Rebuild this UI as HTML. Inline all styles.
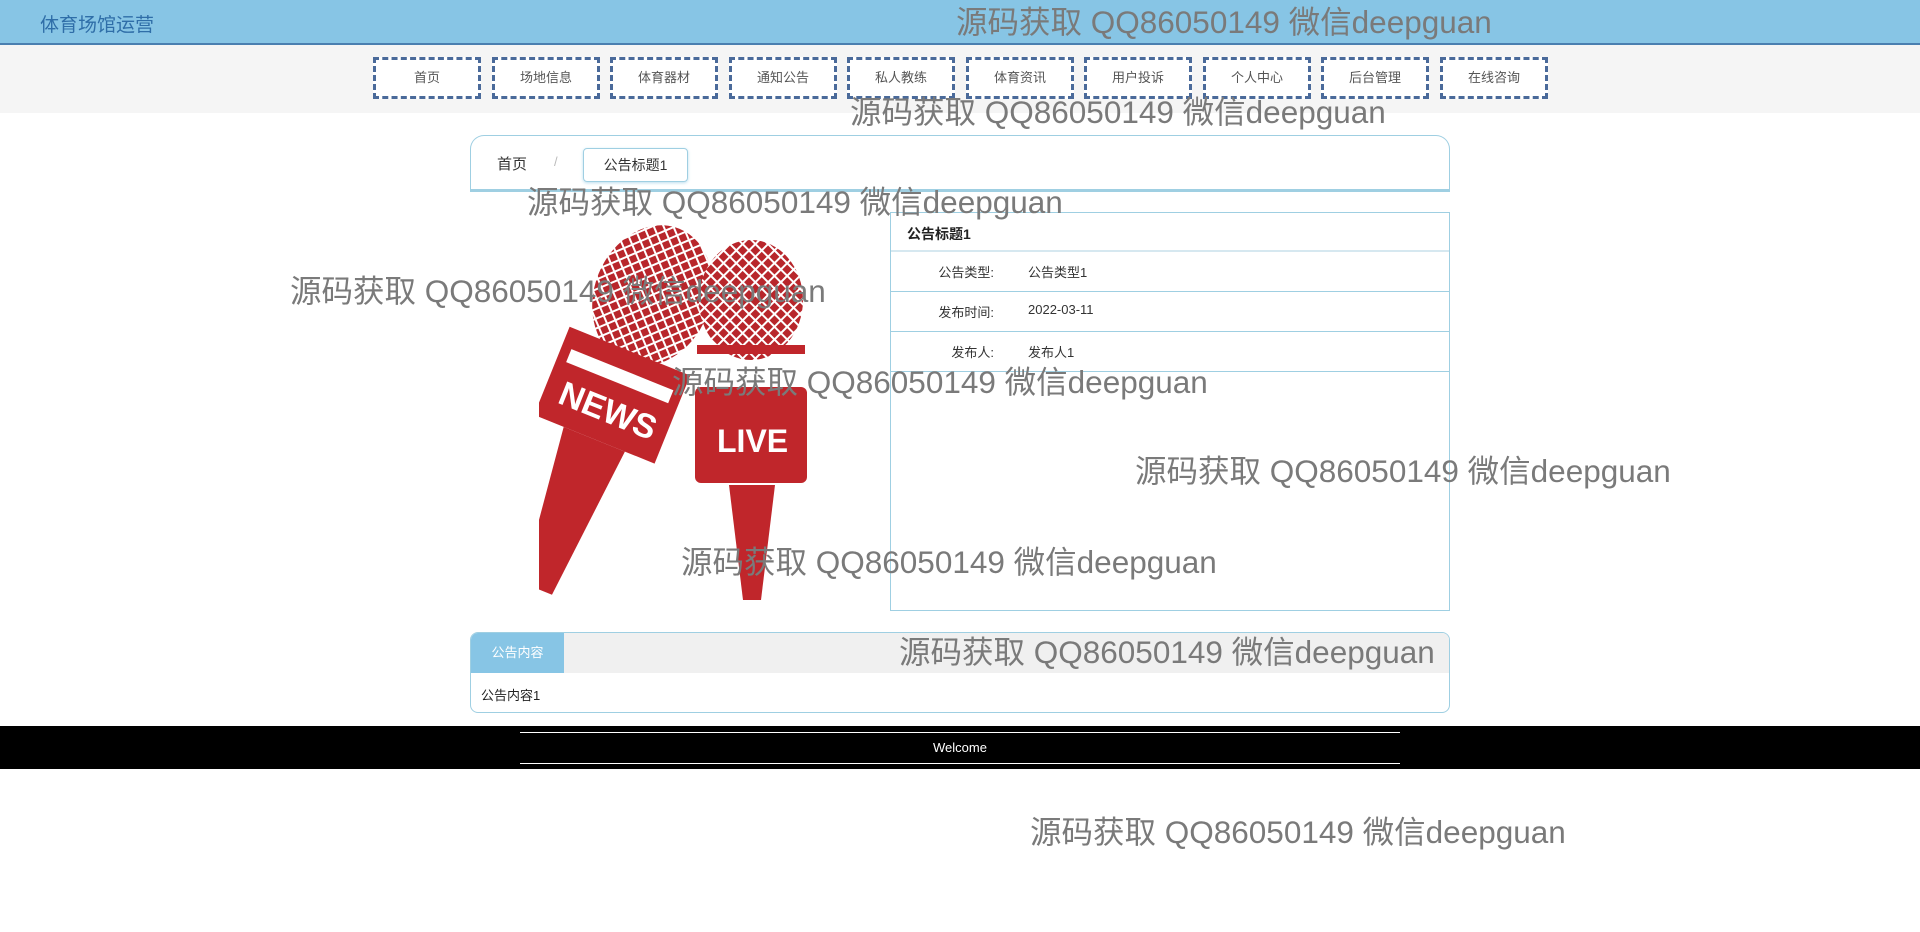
<!DOCTYPE html>
<html><head><meta charset="utf-8"><style>
*{margin:0;padding:0;box-sizing:border-box}
body{width:1920px;height:932px;background:#fff;font-family:"Liberation Sans","Noto Sans CJK SC",sans-serif;position:relative;overflow:hidden}
.hdr{position:absolute;left:0;top:0;width:1920px;height:45px;background:#87c5e5;border-bottom:2px solid #4a7fb0}
.hdr .t{position:absolute;left:40px;top:10px;font-size:19px;color:#2f6ea8}
.nav{position:absolute;left:0;top:45px;width:1920px;height:68px;background:#f5f5f5}
.nav a{position:absolute;top:12px;width:108px;height:42px;border:3px dashed #4a6a9a;background:#fff;font-size:13px;color:#555;text-align:center;line-height:36px;text-decoration:none}
.bc{position:absolute;left:470px;top:135px;width:980px;height:57px;border:1px solid #9fcfe2;border-bottom:3px solid #9fcfe2;border-radius:14px 14px 0 0;background:#fff}
.bc .h{position:absolute;left:26px;top:17px;font-size:15px;color:#333}
.bc .s{position:absolute;left:83px;top:18px;font-size:13px;color:#bbb}
.bc .a{position:absolute;left:112px;top:12px;width:105px;height:34px;border:1px solid #9fcfe2;border-radius:4px;font-size:14px;color:#333;text-align:center;line-height:32px;box-shadow:0 1px 3px #bde}
.tb{position:absolute;left:890px;top:212px;width:560px;height:399px;border:1px solid #9fcfe2}
.tb .ti{height:39px;border-bottom:2px solid #d6e8f0;font-size:14px;font-weight:bold;color:#222;padding:11px 0 0 16px}
.tb .r{height:40px;border-bottom:1px solid #9fcfe2;font-size:13px;color:#333;position:relative}
.tb .r .l{position:absolute;right:455px;top:10px}
.tb .r .v{position:absolute;left:137px;top:10px}
.ct{position:absolute;left:470px;top:632px;width:980px;height:81px;border:1px solid #9fcfe2;border-radius:8px;overflow:hidden}
.ct .bar{height:40px;background:#f0f0f0}
.ct .tab{position:absolute;left:0;top:0;width:93px;height:40px;background:#87c5e5;color:#fff;font-size:13px;text-align:center;line-height:40px}
.ct .bd{position:absolute;left:10px;top:52px;font-size:13px;color:#222}
.ft{position:absolute;left:0;top:726px;width:1920px;height:43px;background:#000}
.ft .ln{position:absolute;left:520px;width:880px;height:1px;background:#fff}
.ft .w{position:absolute;left:0;width:1920px;top:14px;text-align:center;color:#fff;font-size:13px}
.wm{position:absolute;font-size:31.5px;color:#7a7a7a;white-space:nowrap;line-height:1;font-family:"Liberation Sans","Noto Sans CJK SC",sans-serif}
</style></head><body>
<div class="hdr"><div class="t">体育场馆运营</div></div>
<div class="nav">
<a style="left:373px">首页</a><a style="left:492px">场地信息</a><a style="left:610px">体育器材</a><a style="left:729px">通知公告</a><a style="left:847px">私人教练</a><a style="left:966px">体育资讯</a><a style="left:1084px">用户投诉</a><a style="left:1203px">个人中心</a><a style="left:1321px">后台管理</a><a style="left:1440px">在线咨询</a>
</div>
<div class="bc"><span class="h">首页</span><span class="s">/</span><div class="a">公告标题1</div></div>
<svg style="position:absolute;left:539px;top:220px" width="270" height="386" viewBox="0 0 270 386">
<defs><pattern id="p" width="9" height="9" patternUnits="userSpaceOnUse" patternTransform="rotate(45)"><rect width="9" height="9" fill="#fff"/><rect width="7" height="7" fill="#b8262b"/></pattern></defs>
<g transform="rotate(22 90 120)">
<ellipse cx="95" cy="70" rx="58" ry="72" fill="url(#p)"/>
<rect x="30" y="130" width="130" height="95" fill="#c0262b"/>
<polygon points="62,225 128,225 114,385 82,385" fill="#c0262b"/>
<rect x="40" y="150" width="110" height="14" fill="#fff"/>
<text x="46" y="205" font-size="34" font-weight="bold" fill="#fff" font-family="Liberation Sans">NEWS</text>
</g>
<ellipse cx="212" cy="80" rx="52" ry="60" fill="url(#p)"/>
<rect x="158" y="125" width="108" height="9" fill="#c0262b"/>
<rect x="156" y="167" width="112" height="96" rx="6" fill="#c0262b"/>
<text x="178" y="232" font-size="32" font-weight="bold" fill="#fff" font-family="Liberation Sans">LIVE</text>
<polygon points="190,265 236,265 222,380 204,380" fill="#c0262b"/>
</svg>
<div class="tb"><div class="ti">公告标题1</div>
<div class="r"><span class="l">公告类型:</span><span class="v">公告类型1</span></div>
<div class="r"><span class="l">发布时间:</span><span class="v">2022-03-11</span></div>
<div class="r"><span class="l">发布人:</span><span class="v">发布人1</span></div>
</div>
<div class="ct"><div class="bar"></div><div class="tab">公告内容</div><div class="bd">公告内容1</div></div>
<div class="ft"><div class="ln" style="top:6px"></div><div class="w">Welcome</div><div class="ln" style="top:37px"></div></div>
<div class="wm" style="left:956px;top:7px">源码获取 QQ86050149 微信deepguan</div>
<div class="wm" style="left:850px;top:97px">源码获取 QQ86050149 微信deepguan</div>
<div class="wm" style="left:527px;top:187px">源码获取 QQ86050149 微信deepguan</div>
<div class="wm" style="left:290px;top:276px">源码获取 QQ86050149 微信deepguan</div>
<div class="wm" style="left:672px;top:367px">源码获取 QQ86050149 微信deepguan</div>
<div class="wm" style="left:1135px;top:456px">源码获取 QQ86050149 微信deepguan</div>
<div class="wm" style="left:681px;top:547px">源码获取 QQ86050149 微信deepguan</div>
<div class="wm" style="left:899px;top:637px">源码获取 QQ86050149 微信deepguan</div>
<div class="wm" style="left:1030px;top:817px">源码获取 QQ86050149 微信deepguan</div>
</body></html>
